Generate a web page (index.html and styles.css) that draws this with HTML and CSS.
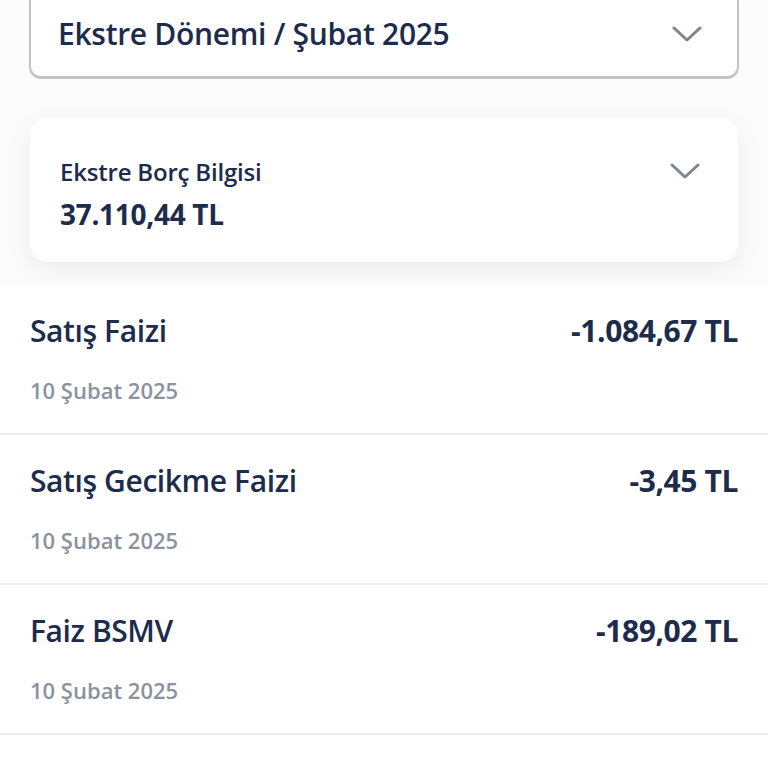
FILE: index.html
```html
<!DOCTYPE html>
<html lang="tr">
<head>
<meta charset="utf-8">
<link rel="stylesheet" href="styles.css">
</head>
<body>
<div class="top">
  <div class="select">
    <span class="select-text">Ekstre Dönemi / Şubat 2025</span>
    <svg class="chev" width="30" height="18" viewBox="0 0 30 18"><path d="M2 3 L15 15 L28 3" fill="none" stroke="#7d8590" stroke-width="3" stroke-linecap="round" stroke-linejoin="round"/></svg>
  </div>
  <div class="card">
    <div class="card-info">
      <div class="card-label">Ekstre Borç Bilgisi</div>
      <div class="card-amount">37.110,44 TL</div>
    </div>
    <svg class="chev card-chev" width="30" height="18" viewBox="0 0 30 18"><path d="M2 3 L15 15 L28 3" fill="none" stroke="#7d8590" stroke-width="3" stroke-linecap="round" stroke-linejoin="round"/></svg>
  </div>
</div>
<div class="list">
  <div class="row">
    <div class="row-main"><span class="title">Satış Faizi</span><span class="amount">-1.084,67 TL</span></div>
    <div class="date">10 Şubat 2025</div>
  </div>
  <div class="row">
    <div class="row-main"><span class="title">Satış Gecikme Faizi</span><span class="amount">-3,45 TL</span></div>
    <div class="date">10 Şubat 2025</div>
  </div>
  <div class="row">
    <div class="row-main"><span class="title">Faiz BSMV</span><span class="amount">-189,02 TL</span></div>
    <div class="date">10 Şubat 2025</div>
  </div>
  <div class="row">
    <div class="row-main"><span class="title">Gecikme BSMV</span><span class="amount">-0,69 TL</span></div>
    <div class="date">10 Şubat 2025</div>
  </div>
</div>
</body>
</html>
```

FILE: styles.css
```css
* { box-sizing: border-box; }
html, body { margin: 0; padding: 0; }
body {
  width: 768px;
  height: 768px;
  overflow: hidden;
  background: #ffffff;
  font-family: "Open Sans", "Noto Sans", sans-serif;
  color: #1d2b4c;
}
.top {
  background: #fbfbfb;
  padding: 0 29px 23px 29px;
}
.select {
  margin-top: -10px;
  height: 89px;
  border: 2.5px solid #c2c4c8;
  border-bottom-width: 3px;
  border-radius: 12px;
  background: #fff;
  display: flex;
  align-items: center;
  justify-content: space-between;
  padding: 0 35px 0 27px;
}
.select-text {
  font-size: 30px;
  font-weight: 600;
  letter-spacing: -0.3px;
  margin-top: -2px;
}
.card {
  margin-top: 39px;
  margin-left: 1px;
  margin-right: 1px;
  height: 144px;
  background: #fff;
  border-radius: 18px;
  box-shadow: 0 8px 24px rgba(0,0,0,0.06);
  display: flex;
  justify-content: space-between;
  align-items: flex-start;
  padding: 39px 38px 0 30px;
}
.card-label {
  font-size: 24px;
  font-weight: 600;
  letter-spacing: -0.2px;
  line-height: 30px;
}
.card-amount {
  font-size: 28px;
  font-weight: 700;
  line-height: 34px;
  margin-top: 10px;
  letter-spacing: -0.3px;
}
.card-chev { margin-top: 5px; }
.row {
  height: 150px;
  border-bottom: 2px solid #eeeeee;
  padding: 27px 30px 0 30px;
}
.row-main {
  display: flex;
  justify-content: space-between;
  align-items: center;
  line-height: 38px;
}
.title {
  font-size: 30px;
  font-weight: 600;
  letter-spacing: -0.4px;
}
.amount {
  font-size: 30px;
  font-weight: 700;
  letter-spacing: -0.4px;
}
.date {
  margin-top: 26px;
  font-size: 22px;
  font-weight: 600;
  color: #8a92a0;
  line-height: 28px;
}
```
